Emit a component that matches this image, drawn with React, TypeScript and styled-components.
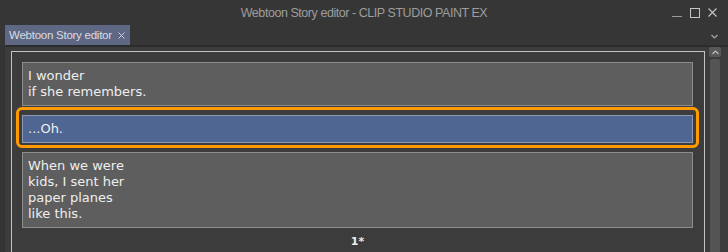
import React from 'react';
import styled, { createGlobalStyle } from 'styled-components';

const GlobalStyle = createGlobalStyle`
	html, body {
		margin: 0;
		padding: 0;
		background: #363636;
	}
`;

const Window = styled.div`
	width: 728px;
	height: 252px;
	overflow: hidden;
	display: flex;
	flex-direction: column;
	background: #343434;
	font-family: 'Liberation Sans', Arial, sans-serif;
`;

const TitleBar = styled.div`
	height: 25px;
	flex: none;
	display: grid;
	grid-template-columns: 1fr auto 1fr;
	align-items: center;
	background: #363636;
`;

const Title = styled.div`
	grid-column: 2;
	font-size: 12.5px;
	letter-spacing: -0.45px;
	color: #9d9d9d;
	padding-top: 1px;
`;

const Controls = styled.div`
	grid-column: 3;
	justify-self: end;
	display: flex;
	align-items: center;
	gap: 8px;
	padding-right: 10px;
`;

const TabStrip = styled.div`
	height: 20px;
	flex: none;
	display: flex;
	align-items: stretch;
	padding: 0 10px 0 5px;
	background: #363636;
`;

const Tab = styled.div`
	width: 125px;
	box-sizing: border-box;
	display: flex;
	align-items: center;
	gap: 6px;
	padding-left: 4px;
	background: #5e6884;
	color: #dcdde2;
	font-size: 11.5px;
	letter-spacing: -0.25px;
	white-space: nowrap;

	svg {
		flex: none;
	}
`;

const TabMenu = styled.div`
	margin-left: auto;
	display: flex;
	align-items: center;
	padding-top: 2px;
`;

const Workspace = styled.div`
	flex: 1;
	min-height: 0;
	display: flex;
	margin-left: 5px;
	padding-left: 6px;
	background: #3c3c3c;
	border-top: 2px solid #2c2c2c;
`;

const Frame = styled.div`
	width: 694px;
	flex: none;
	box-sizing: border-box;
	margin-top: 4px;
	border: 1px solid #c3c3c3;
	border-bottom: none;
	padding: 10px 11px 0 10px;
	display: flex;
	flex-direction: column;
`;

const Balloon = styled.div<{ $selected?: boolean }>`
	border: 1px solid ${(p) => (p.$selected ? '#8d9ab6' : '#8d8d8d')};
	background: ${(p) => (p.$selected ? '#4f6592' : '#5e5e5e')};
	color: #eeeeee;
	padding: 5px;
	font-family: 'DejaVu Sans', sans-serif;
	font-size: 13px;
	line-height: 16px;
	white-space: pre-line;
`;

const Highlight = styled.div`
	margin: 1px -6px 4px -6px;
	border: 3px solid #ff9b00;
	border-radius: 6px;
	padding: 5px 3px 2px 3px;
`;

const PageLabel = styled.div`
	margin-top: 8px;
	text-align: center;
	color: #ececec;
	font-family: 'DejaVu Sans', sans-serif;
	font-weight: bold;
	font-size: 11px;
	line-height: 12px;
`;

const ScrollBar = styled.div`
	width: 12px;
	margin-left: 4px;
	display: flex;
	flex-direction: column;
	gap: 2px;
`;

const ScrollButton = styled.div`
	height: 10px;
	border-radius: 2px;
	background: #585858;
	display: flex;
	align-items: center;
	justify-content: center;
`;

const ScrollTrack = styled.div`
	flex: 1;
	margin: 0 1px;
	border-radius: 2px 2px 0 0;
	background: #545454;
`;

const lines = [
	'I wonder\nif she remembers.',
	'...Oh.',
	'When we were\nkids, I sent her\npaper planes\nlike this.',
];

export default function App() {
	return (
		<>
			<GlobalStyle />
			<Window>
				<TitleBar>
					<Title>Webtoon Story editor - CLIP STUDIO PAINT EX</Title>
					<Controls>
						<svg width="10" height="10" viewBox="0 0 10 10">
							<path d="M0 8.5H10" stroke="#9a9a9a" strokeWidth="1" />
						</svg>
						<svg width="10" height="10" viewBox="0 0 10 10">
							<rect x="0.5" y="0.5" width="9" height="9" fill="none" stroke="#c4c4c4" strokeWidth="1" />
						</svg>
						<svg width="10" height="10" viewBox="0 0 10 10">
							<path d="M0.5 0.5L8.5 8.5M8.5 0.5L0.5 8.5" stroke="#c4c4c4" strokeWidth="1.1" />
						</svg>
					</Controls>
				</TitleBar>
				<TabStrip>
					<Tab>
						<span>Webtoon Story editor</span>
						<svg width="7" height="7" viewBox="0 0 7 7">
							<path d="M0.5 0.5L6.5 6.5M6.5 0.5L0.5 6.5" stroke="#d0d2d8" strokeWidth="1" />
						</svg>
					</Tab>
					<TabMenu>
						<svg width="7" height="5" viewBox="0 0 7 5">
							<path d="M0.5 1L3.5 4L6.5 1" fill="none" stroke="#a8a8a8" strokeWidth="1.2" />
						</svg>
					</TabMenu>
				</TabStrip>
				<Workspace>
					<Frame>
						<Balloon>{lines[0]}</Balloon>
						<Highlight>
							<Balloon $selected>{lines[1]}</Balloon>
						</Highlight>
						<Balloon>{lines[2]}</Balloon>
						<PageLabel>1*</PageLabel>
					</Frame>
					<ScrollBar>
						<ScrollButton>
							<svg width="7" height="5" viewBox="0 0 7 5">
								<path d="M0.5 4L3.5 1L6.5 4" fill="none" stroke="#bdbdbd" strokeWidth="1.2" />
							</svg>
						</ScrollButton>
						<ScrollTrack />
					</ScrollBar>
				</Workspace>
			</Window>
		</>
	);
}
